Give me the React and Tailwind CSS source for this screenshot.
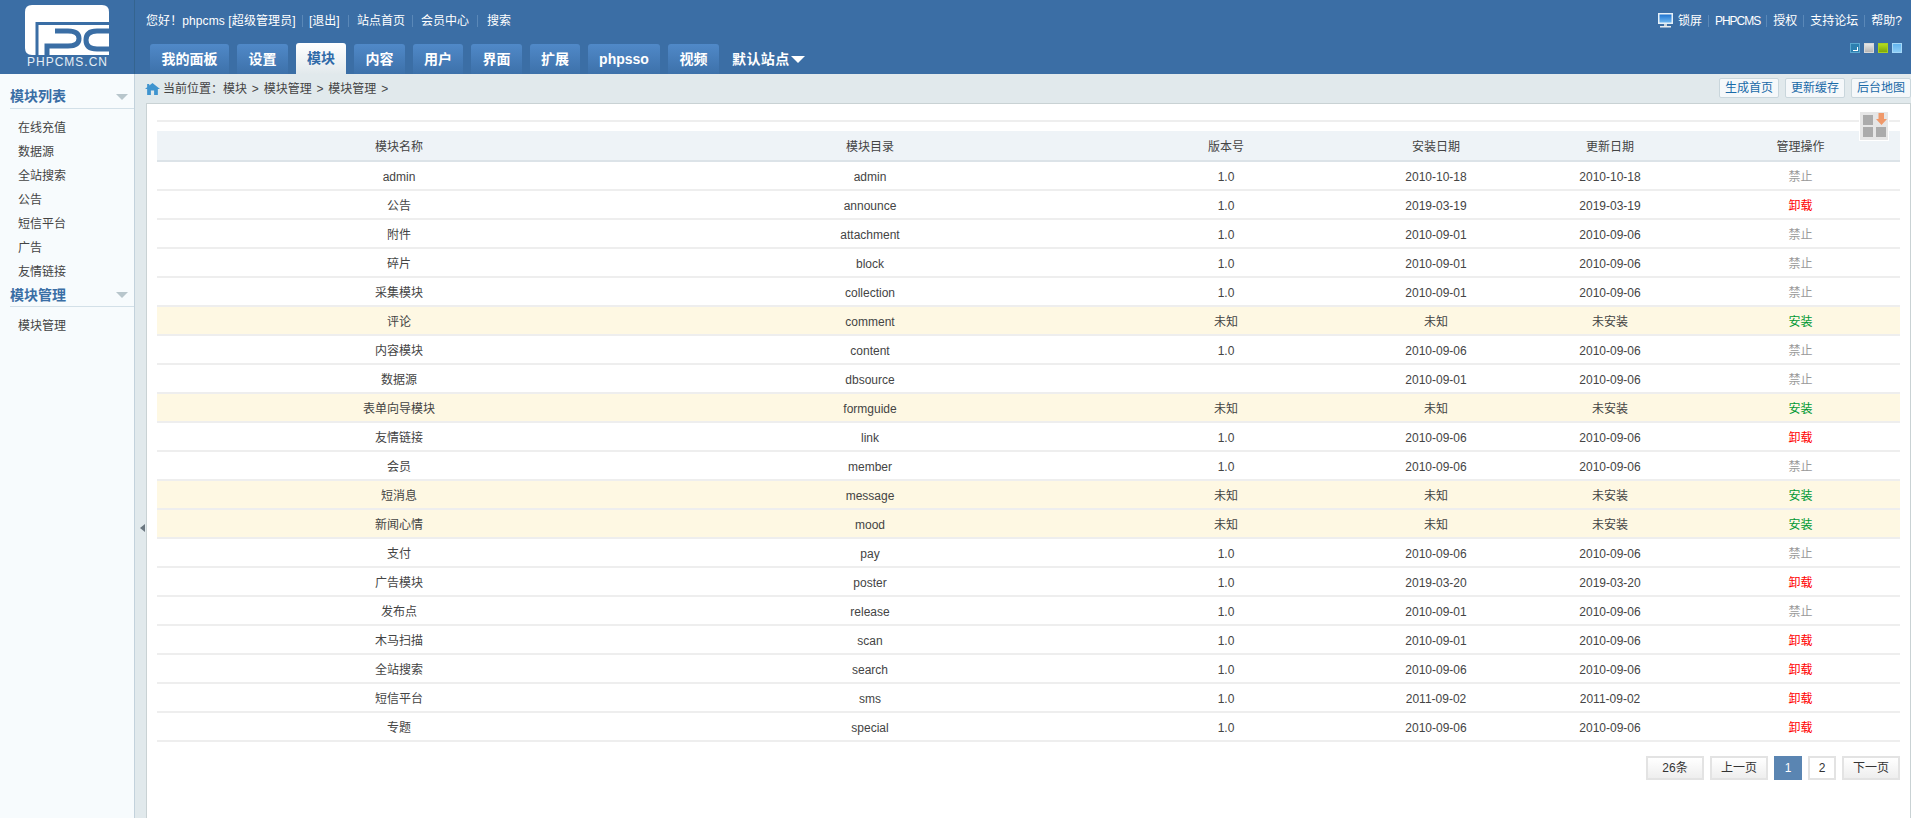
const FONT = "font-['Liberation_Sans','Noto_Sans_CJK_SC',sans-serif]";

const rows = [
  ["admin","admin","1.0","2010-10-18","2010-10-18","禁止"],
  ["公告","announce","1.0","2019-03-19","2019-03-19","卸载"],
  ["附件","attachment","1.0","2010-09-01","2010-09-06","禁止"],
  ["碎片","block","1.0","2010-09-01","2010-09-06","禁止"],
  ["采集模块","collection","1.0","2010-09-01","2010-09-06","禁止"],
  ["评论","comment","未知","未知","未安装","安装"],
  ["内容模块","content","1.0","2010-09-06","2010-09-06","禁止"],
  ["数据源","dbsource","","2010-09-01","2010-09-06","禁止"],
  ["表单向导模块","formguide","未知","未知","未安装","安装"],
  ["友情链接","link","1.0","2010-09-06","2010-09-06","卸载"],
  ["会员","member","1.0","2010-09-06","2010-09-06","禁止"],
  ["短消息","message","未知","未知","未安装","安装"],
  ["新闻心情","mood","未知","未知","未安装","安装"],
  ["支付","pay","1.0","2010-09-06","2010-09-06","禁止"],
  ["广告模块","poster","1.0","2019-03-20","2019-03-20","卸载"],
  ["发布点","release","1.0","2010-09-01","2010-09-06","禁止"],
  ["木马扫描","scan","1.0","2010-09-01","2010-09-06","卸载"],
  ["全站搜索","search","1.0","2010-09-06","2010-09-06","卸载"],
  ["短信平台","sms","1.0","2011-09-02","2011-09-02","卸载"],
  ["专题","special","1.0","2010-09-06","2010-09-06","卸载"],
];

const actionColor = { "禁止": "text-[#999999]", "卸载": "text-[#ff0000]", "安装": "text-[#009933]" };

const tabs = [
  ["我的面板", "w-[79px]"], ["设置", "w-[51px]"], ["模块", "w-[50px]"], ["内容", "w-[51px]"],
  ["用户", "w-[50px]"], ["界面", "w-[51px]"], ["扩展", "w-[50px]"], ["phpsso", "w-[72px]"], ["视频", "w-[51px]"],
];

function Sep({ className = "" }) {
  return <span className={`w-px h-[12px] bg-[#5a88b8] ${className}`} />;
}

function Logo() {
  return (
    <div className="w-[135px] h-full shrink-0 border-r border-r-[#34648f] flex flex-col items-start pt-[5px] pl-[25px]">
      <svg width="84" height="50" viewBox="0 0 84 50" className="block">
        <path fill="#fff" d="M7 0H77Q84 0 84 7V50H7Q0 50 0 43V7Q0 0 7 0Z" />
        <path fill="none" stroke="#3a6ea5" strokeWidth="3" d="M12 51V18.5H84" />
        <path fill="none" stroke="#3a6ea5" strokeWidth="5" d="M22 51V41H43Q54 41 54 33.5Q54 26 43 26H30" />
        <path fill="none" stroke="#3a6ea5" strokeWidth="5" d="M84 26H72Q61 26 61 35Q61 44 72 44H84" />
      </svg>
      <div className="text-[12px] leading-[12px] mt-[1px] ml-[2px] text-[#e6eef6] tracking-[1px] font-['Liberation_Sans',sans-serif]">PHPCMS.CN</div>
    </div>
  );
}

function TopLeft() {
  return (
    <div className="flex items-center h-[44px] pb-[3px] pl-[11px] text-white text-[12px]">
      <span className="w-[150px] whitespace-nowrap tracking-[0.1px]">您好！phpcms [超级管理员]</span>
      <Sep className="ml-[6px]" />
      <span className="ml-[6px] w-[33px] whitespace-nowrap">[退出]</span>
      <Sep className="ml-[6px]" />
      <span className="ml-[8px]">站点首页</span>
      <Sep className="ml-[7px]" />
      <span className="ml-[8px]">会员中心</span>
      <Sep className="ml-[8px]" />
      <span className="ml-[9px]">搜索</span>
    </div>
  );
}

function TopRight() {
  return (
    <div className="flex items-center h-[44px] pb-[3px] pr-[9px] text-white text-[12px] gap-[6px]">
      <svg width="15" height="15" viewBox="0 0 15 15" className="mr-[-1px]">
        <defs>
          <linearGradient id="scr" x1="0" y1="0" x2="0" y2="1">
            <stop offset="0" stopColor="#1f74d0" />
            <stop offset="1" stopColor="#6db6f0" />
          </linearGradient>
        </defs>
        <rect x="0" y="0" width="15" height="11" fill="#e6f0f8" />
        <rect x="1.5" y="1.5" width="12" height="8" fill="url(#scr)" />
        <rect x="6" y="11" width="3" height="2" fill="#c9d4dc" />
        <rect x="2" y="13" width="11" height="1.5" fill="#e8ecef" />
      </svg>
      <span>锁屏</span>
      <Sep />
      <span className="tracking-[-1px]">PHPCMS</span>
      <Sep />
      <span>授权</span>
      <Sep />
      <span>支持论坛</span>
      <Sep />
      <span>帮助?</span>
    </div>
  );
}

function Skins() {
  return (
    <div className="flex gap-[4px] self-start -mt-px mr-[9px]">
      <span className="w-[10px] h-[10px] bg-[#2c7fb0] border border-[#5aa8d0] flex items-end justify-end p-px">
        <span className="w-[5px] h-[4px] border-r border-b border-r-white border-b-white" />
      </span>
      <span className="w-[10px] h-[10px] bg-gradient-to-b from-[#e6e6e6] to-[#b5b5b5] border border-[#d8d8d8]" />
      <span className="w-[10px] h-[10px] bg-gradient-to-b from-[#b4dc1e] to-[#7fa808] border border-[#a8cf20]" />
      <span className="w-[10px] h-[10px] bg-gradient-to-b from-[#62b4ef] to-[#8ccdf6] border border-[#a4d8f8]" />
    </div>
  );
}

function Tabs() {
  return (
    <div className="flex items-end justify-between h-[30px] pl-[15px]">
      <div className="flex items-end gap-[8px]">
        {tabs.map(([t, w]) =>
          t === "模块" ? (
            <div key={t} className={`${w} h-[31px] rounded-t-[3px] bg-gradient-to-b from-white to-[#e2e9ec] text-[#2f6aa8] text-[14px] font-bold flex items-center justify-center`}>
              {t}
            </div>
          ) : (
            <div key={t} className={`${w} h-[30px] rounded-t-[3px] bg-gradient-to-b from-[#5089c8] to-[#3d71aa] text-white text-[14px] font-bold flex items-center justify-center`}>
              {t}
            </div>
          )
        )}
        <div className="ml-[5px] h-[30px] flex items-center text-white text-[14px] font-bold tracking-[0.4px]">
          默认站点
          <span className="ml-[1px] mt-[1px] w-0 h-0 border-x-[7px] border-x-transparent border-t-[7px] border-t-white" />
        </div>
      </div>
      <Skins />
    </div>
  );
}

function SideHead({ children, className = "h-[24px]" }) {
  return (
    <div className={`ml-[10px] ${className} flex items-center justify-between border-b border-b-[#d3e0e8] text-[#3a6ea5] text-[14px] font-bold pr-[6px]`}>
      {children}
      <span className="w-0 h-0 border-x-[6px] border-x-transparent border-t-[6px] border-t-[#b8c6cc]" />
    </div>
  );
}

function SideItem({ children }) {
  return <div className="pl-[18px] h-[24px] leading-[24px] text-[12px] text-[#444444]">{children}</div>;
}

function Sidebar() {
  return (
    <aside className="w-[135px] shrink-0 h-full border-r border-r-[#c3d2dc] bg-[#f7fbfd] pt-[11px]">
      <SideHead>模块列表</SideHead>
      <div className="pt-[7px]">
        {["在线充值","数据源","全站搜索","公告","短信平台","广告","友情链接"].map((s) => <SideItem key={s}>{s}</SideItem>)}
      </div>
      <SideHead className="h-[23px]">模块管理</SideHead>
      <div className="pt-[7px]">
        <SideItem>模块管理</SideItem>
      </div>
    </aside>
  );
}

function Breadcrumb() {
  return (
    <div className="h-[29px] shrink-0 flex items-center justify-between text-[12px] text-[#444444]">
      <div className="flex items-center gap-[3px]">
        <svg width="15" height="12" viewBox="0 0 14 12" className="-ml-px" preserveAspectRatio="none">
          <path fill="#3f94cf" d="M7 0L14 6H12V12H8.5V7.5H5.5V12H2V6H0L2 4.3V1H4V2.6Z" />
        </svg>
        <span className="[word-spacing:1.5px]">当前位置：模块 &gt; 模块管理 &gt; 模块管理 &gt;</span>
      </div>
      <div className="flex items-center gap-[6px] mb-[1px]">
        {["生成首页","更新缓存","后台地图"].map((s) => (
          <span key={s} className="w-[60px] h-[20px] flex items-center justify-center rounded-[2px] border border-[#c9d6dc] bg-[#f5f8fa] text-[#1a6aa8]">{s}</span>
        ))}
      </div>
    </div>
  );
}

function ColumnIcon() {
  return (
    <div className="absolute right-[21px] top-[7px] w-[30px] h-[30px] bg-[#e6e6e6] border border-white">
      <svg width="28" height="28" viewBox="0 0 28 28" className="block">
        <rect x="3" y="3" width="10" height="10" fill="#ababab" />
        <rect x="16" y="15" width="10" height="10" fill="#ababab" />
        <rect x="3" y="15" width="10" height="10" fill="#ababab" />
        <path fill="#f0996a" d="M18.5 1H24V7H27L21.5 13L16 7H18.5Z" />
      </svg>
    </div>
  );
}

function Pager() {
  const base = "h-[24px] flex items-center justify-center border-2 border-[#e3e3e3] text-[12px] text-[#333333]";
  return (
    <div className="flex justify-end gap-[6px] mt-[14px]">
      <span className={`${base} w-[58px] bg-gradient-to-b from-white to-[#eeeeee]`}>26条</span>
      <span className={`${base} w-[58px] bg-gradient-to-b from-white to-[#eeeeee]`}>上一页</span>
      <span className="h-[24px] w-[28px] flex items-center justify-center bg-[#5a85b2] text-white text-[12px]">1</span>
      <span className={`${base} w-[28px] bg-white`}>2</span>
      <span className={`${base} w-[58px] bg-gradient-to-b from-white to-[#eeeeee]`}>下一页</span>
    </div>
  );
}

function DataTable() {
  return (
    <table className="w-full table-fixed text-[12px] text-[#444444]">
      <colgroup>
        <col className="w-[484px]" />
        <col className="w-[458px]" />
        <col className="w-[254px]" />
        <col className="w-[166px]" />
        <col className="w-[182px]" />
        <col />
      </colgroup>
      <thead>
        <tr className="h-[30px] bg-[#eef3f7] border-b-2 border-b-[#dce3e8]">
          {["模块名称","模块目录","版本号","安装日期","更新日期","管理操作"].map((h) => (
            <th key={h} className="font-normal text-center p-0 pt-[2px]">{h}</th>
          ))}
        </tr>
      </thead>
      <tbody>
        {rows.map((r) => (
          <tr key={r[1]} className={`h-[29px] border-b-2 border-b-[#eeeeee] ${r[5] === "安装" ? "bg-[#fef8e3]" : "bg-white"}`}>
            {r.slice(0, 5).map((c, i) => <td key={i} className="text-center p-0 pt-[2px]">{c}</td>)}
            <td className={`text-center p-0 pt-[2px] ${actionColor[r[5]]}`}>{r[5]}</td>
          </tr>
        ))}
      </tbody>
    </table>
  );
}

export default function App() {
  return (
    <div className={`w-[1911px] h-[818px] overflow-hidden flex flex-col ${FONT}`}>
      <header className="h-[74px] shrink-0 bg-[#3b6ea5] flex">
        <Logo />
        <div className="flex-1 flex flex-col">
          <div className="flex justify-between">
            <TopLeft />
            <TopRight />
          </div>
          <Tabs />
        </div>
      </header>
      <div className="flex-1 flex min-h-0">
        <Sidebar />
        <div className="w-[11px] shrink-0 bg-[#e1e9ec] flex items-start justify-start h-full pt-[450px] pl-[5px]">
          <span className="w-0 h-0 border-y-[4px] border-y-transparent border-r-[5px] border-r-[#6b7780]" />
        </div>
        <main className="flex-1 min-w-0 flex flex-col bg-[#e1e9ec]">
          <Breadcrumb />
          <section className="relative flex-1 bg-white border border-b-0 border-[#c9d2d4] pl-[10px] pr-[10px] pt-[16px]">
            <ColumnIcon />
            <div className="border-t-2 border-t-[#eeeeee] h-[11px]" />
            <DataTable />
            <Pager />
          </section>
        </main>
      </div>
    </div>
  );
}
